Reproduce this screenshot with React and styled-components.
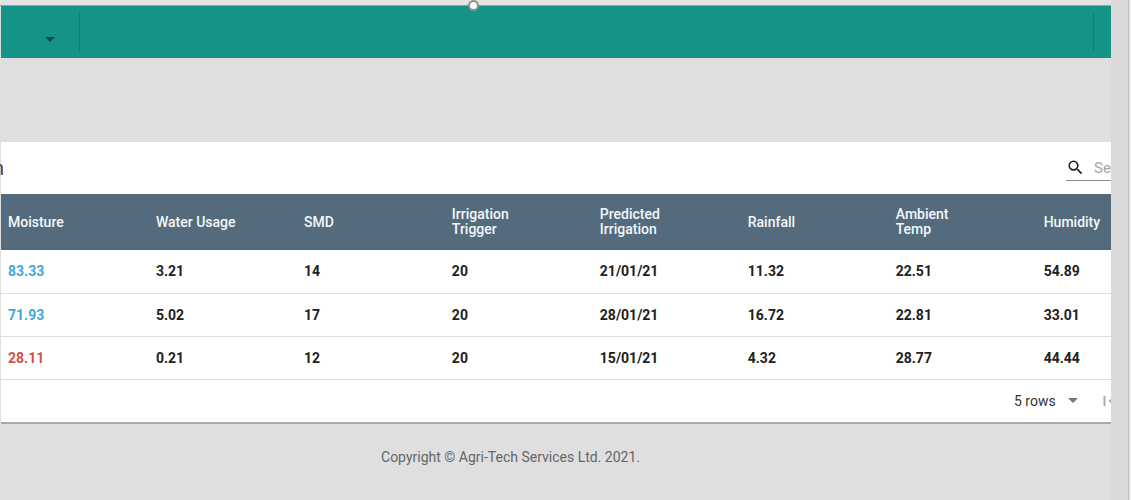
import React from "react";
import styled, { createGlobalStyle } from "styled-components";

const GlobalStyle = createGlobalStyle`
  *, *::before, *::after { box-sizing: border-box; }
  body {
    margin: 0;
    background: #dfdfdf;
    color: #212121;
    font-family: Roboto, "Liberation Sans", sans-serif;
    font-size: 14px;
  }
`;

const Frame = styled.div`
  position: relative;
  display: flex;
  flex-direction: column;
  min-height: 100vh;
  border-right: 2px solid #e9e9e9;
`;

const TopEdge = styled.div`
  height: 6px;
  background: #e4e4e4;
  border-bottom: 1px solid #8da5a0;
  margin-right: 18px;
`;

const Handle = styled.span`
  position: absolute;
  z-index: 1;
  top: 0;
  left: 42%;
  width: 11px;
  height: 11px;
  margin-left: -6px;
  border: 2px solid #8b8f8e;
  border-radius: 50%;
  background: #fff;
`;

const Gutter = styled.div`
  position: absolute;
  top: 0;
  right: 0;
  bottom: 0;
  width: 18px;
  background: #dadada;
  border-right: 1px solid #bdbdbd;
`;

const Page = styled.div`
  flex: 1;
  margin-right: 18px;
  padding-left: 1px;
  overflow: hidden;
`;

const AppBar = styled.header`
  display: flex;
  align-items: center;
  justify-content: space-between;
  height: 52px;
  padding-right: 17px;
  background: #159387;
`;

const BarGroup = styled.div`
  display: flex;
  align-items: center;
  justify-content: flex-end;
  width: ${(p) => (p.$wide ? "79px" : "1px")};
  height: 38px;
  border-right: 1px solid #127a70;
`;

const MenuButton = styled.button`
  display: flex;
  margin-right: 24px;
  padding: 14px 0 0;
  border: 0;
  background: none;
  color: #0b4d46;
`;

const Card = styled.main`
  margin-top: 84px;
  background: #fff;
  border-bottom: 2px solid #a9a9a9;
`;

const Toolbar = styled.div`
  display: flex;
  align-items: center;
  justify-content: space-between;
  height: 52px;
`;

const Title = styled.h2`
  margin: 0 0 0 -8px;
  font-size: 20px;
  line-height: 24px;
  font-weight: 400;
  color: #444;
`;

const SearchField = styled.label`
  display: flex;
  flex: none;
  align-items: center;
  gap: 9px;
  width: 45px;
  height: 26px;
  border-bottom: 1px solid #8c8c8c;
  color: #212121;

  svg { flex: none; }
`;

const SearchInput = styled.input`
  flex: none;
  width: 120px;
  padding: 0;
  border: 0;
  outline: 0;
  background: none;
  font: inherit;
  font-size: 15px;

  &::placeholder { color: #a4a4a4; opacity: 1; }
`;

const Table = styled.table`
  width: 100%;
  table-layout: fixed;
  border-collapse: collapse;
`;

const HeadCell = styled.th`
  width: ${(p) => (p.$last ? "auto" : "13.33%")};
  height: 56px;
  padding: 0 0 0 7px;
  background: #546b7e;
  color: #f3f8fb;
  font-size: 14px;
  line-height: 15px;
  font-weight: 500;
  text-align: left;
`;

const HeadLabel = styled.span`
  display: block;
  max-width: 76px;
  white-space: ${(p) => (p.$wrap ? "normal" : "nowrap")};
`;

const tones = { high: "#3fa6e0", low: "#d24f45" };

const Cell = styled.td`
  height: 43px;
  padding: 0 0 0 7px;
  border-bottom: 1px solid #e0e0e0;
  color: ${(p) => tones[p.$tone] || "#212121"};
  font-size: 14px;
  font-weight: 700;
`;

const Pagination = styled.div`
  display: flex;
  align-items: center;
  justify-content: flex-end;
  height: 42px;
`;

const RowsPicker = styled.label`
  display: flex;
  align-items: center;
  gap: 12px;
  margin-right: 24px;
  color: #757575;
`;

const RowsSelect = styled.select`
  appearance: none;
  padding: 0;
  border: 0;
  background: none;
  color: #333;
  font: inherit;
  font-size: 14px;
`;

const FirstButton = styled.button`
  display: flex;
  flex: none;
  width: 9px;
  padding: 0;
  border: 0;
  background: none;
  color: #ababab;
  overflow: hidden;

  svg { flex: none; }
`;

const Footer = styled.footer`
  padding: 24px 91px 24px 0;
  color: #666;
  font-size: 14px;
  line-height: 18px;
  text-align: center;
`;

const Caret = () => (
  <svg width="10" height="5" viewBox="0 0 10 5" aria-hidden="true">
    <path d="M0 0h10L5 5z" fill="currentColor" />
  </svg>
);

const columns = [
  "Moisture",
  "Water Usage",
  "SMD",
  "Irrigation Trigger",
  "Predicted Irrigation",
  "Rainfall",
  "Ambient Temp",
  "Humidity",
];

const rows = [
  { tone: "high", values: ["83.33", "3.21", "14", "20", "21/01/21", "11.32", "22.51", "54.89"] },
  { tone: "high", values: ["71.93", "5.02", "17", "20", "28/01/21", "16.72", "22.81", "33.01"] },
  { tone: "low", values: ["28.11", "0.21", "12", "20", "15/01/21", "4.32", "28.77", "44.44"] },
];

export default function App() {
  return (
    <>
      <GlobalStyle />
      <Frame>
        <TopEdge />
        <Handle />
        <Gutter />
        <Page>
          <AppBar>
            <BarGroup $wide>
              <MenuButton aria-label="Open menu">
                <Caret />
              </MenuButton>
            </BarGroup>
            <BarGroup />
          </AppBar>
          <Card>
            <Toolbar>
              <Title>n</Title>
              <SearchField>
                <svg width="19" height="19" viewBox="0 0 24 24" aria-hidden="true">
                  <path
                    fill="currentColor"
                    d="M15.5 14h-.79l-.28-.27A6.471 6.471 0 0 0 16 9.5 6.5 6.5 0 1 0 9.5 16c1.61 0 3.09-.59 4.23-1.57l.27.28v.79l5 4.99L20.49 19l-4.99-5zm-6 0C7.01 14 5 11.99 5 9.5S7.01 5 9.5 5 14 7.01 14 9.5 11.99 14 9.5 14z"
                  />
                </svg>
                <SearchInput type="text" placeholder="Search" aria-label="Search" />
              </SearchField>
            </Toolbar>
            <Table>
              <thead>
                <tr>
                  {columns.map((name, i) => (
                    <HeadCell key={name} scope="col" $last={i === columns.length - 1}>
                      <HeadLabel $wrap={name !== "Water Usage"}>{name}</HeadLabel>
                    </HeadCell>
                  ))}
                </tr>
              </thead>
              <tbody>
                {rows.map((row) => (
                  <tr key={row.values[0]}>
                    {row.values.map((value, i) => (
                      <Cell key={columns[i]} $tone={i === 0 ? row.tone : undefined}>
                        {value}
                      </Cell>
                    ))}
                  </tr>
                ))}
              </tbody>
            </Table>
            <Pagination>
              <RowsPicker>
                <RowsSelect aria-label="Rows per page" defaultValue="5">
                  <option value="5">5 rows</option>
                </RowsSelect>
                <Caret />
              </RowsPicker>
              <FirstButton aria-label="First page">
                <svg width="16" height="12" viewBox="0 0 16 12" aria-hidden="true">
                  <path d="M2.5 1v10M13 1L8 6l5 5" fill="none" stroke="currentColor" strokeWidth="2" />
                </svg>
              </FirstButton>
            </Pagination>
          </Card>
          <Footer>Copyright © Agri-Tech Services Ltd. 2021.</Footer>
        </Page>
      </Frame>
    </>
  );
}
